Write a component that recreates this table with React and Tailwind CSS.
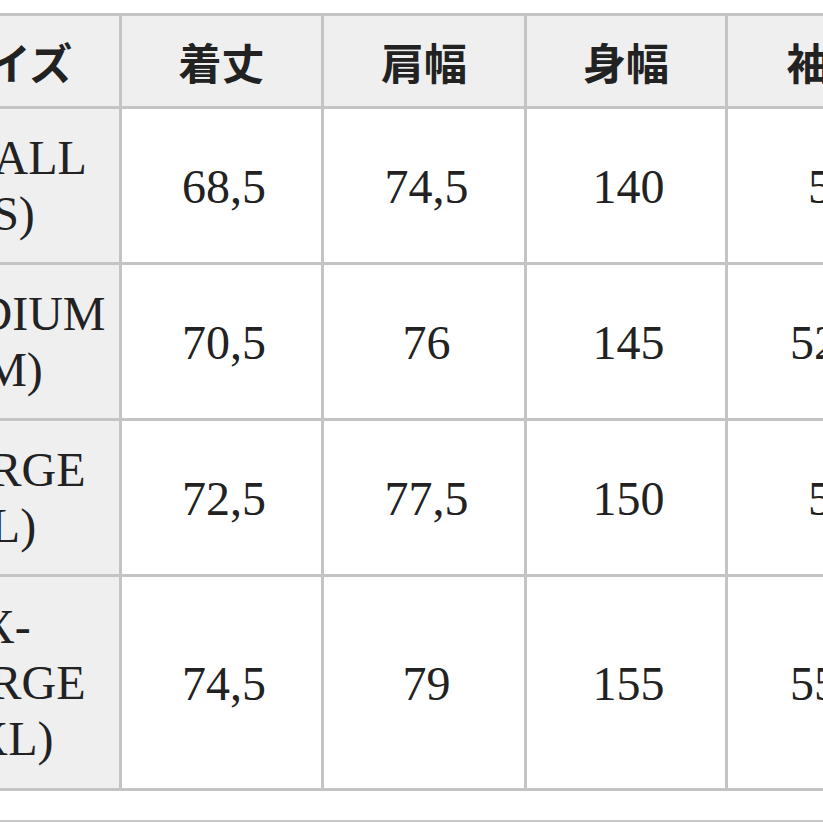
const header = ["サイズ", "着丈", "肩幅", "身幅", "袖丈"];

const rows = [
  { size: ["SMALL", "(S)"], vals: ["68,5", "74,5", "140", "51"], h: "h-[156px]" },
  { size: ["MEDIUM", "(M)"], vals: ["70,5", "76", "145", "52,5"], h: "h-[156px]" },
  { size: ["LARGE", "(L)"], vals: ["72,5", "77,5", "150", "54"], h: "h-[156px]" },
  { size: ["X-", "LARGE", "(XL)"], vals: ["74,5", "79", "155", "55,5"], h: "h-[214px]" },
];

const cell = "border-[3px] border-[#c4c4c4] text-center align-middle";

export default function App() {
  return (
    <div className="w-[823px] h-[823px] overflow-hidden bg-white relative text-[#222]">
      <div className="pt-[13px] ml-[-107px]">
        <table
          className="table-fixed border-collapse w-[1038px]"
          style={{ fontFamily: '"Liberation Serif", "Noto Sans CJK JP", serif' }}
        >
          <colgroup>
            <col className="w-[226px]" />
            <col className="w-[202px]" />
            <col className="w-[203px]" />
            <col className="w-[201px]" />
            <col className="w-[206px]" />
          </colgroup>
          <thead>
            <tr className="h-[93px] bg-[#efefef]">
              {header.map((t, i) => (
                <th
                  key={i}
                  className={`${cell} text-[43px] font-bold leading-none ${i === 0 ? "pl-[2px]" : ""}`}
                  style={{ fontFamily: '"Noto Sans CJK JP", sans-serif' }}
                >
                  {t}
                </th>
              ))}
            </tr>
          </thead>
          <tbody>
            {rows.map((r, i) => (
              <tr key={i} className={r.h}>
                <td className={`${cell} bg-[#efefef] text-[48px] leading-[56px] pr-[4px]`}>
                  {r.size.map((s, j) => (
                    <div key={j}>{s}</div>
                  ))}
                </td>
                {r.vals.map((v, j) => (
                  <td key={j} className={`${cell} bg-white text-[48px] leading-none pt-[3px] pl-[5px]`}>
                    {v}
                  </td>
                ))}
              </tr>
            ))}
          </tbody>
        </table>
      </div>
      <div className="absolute left-0 right-0 top-[820px] h-[2px] bg-[#c8c8c8]" />
    </div>
  );
}
